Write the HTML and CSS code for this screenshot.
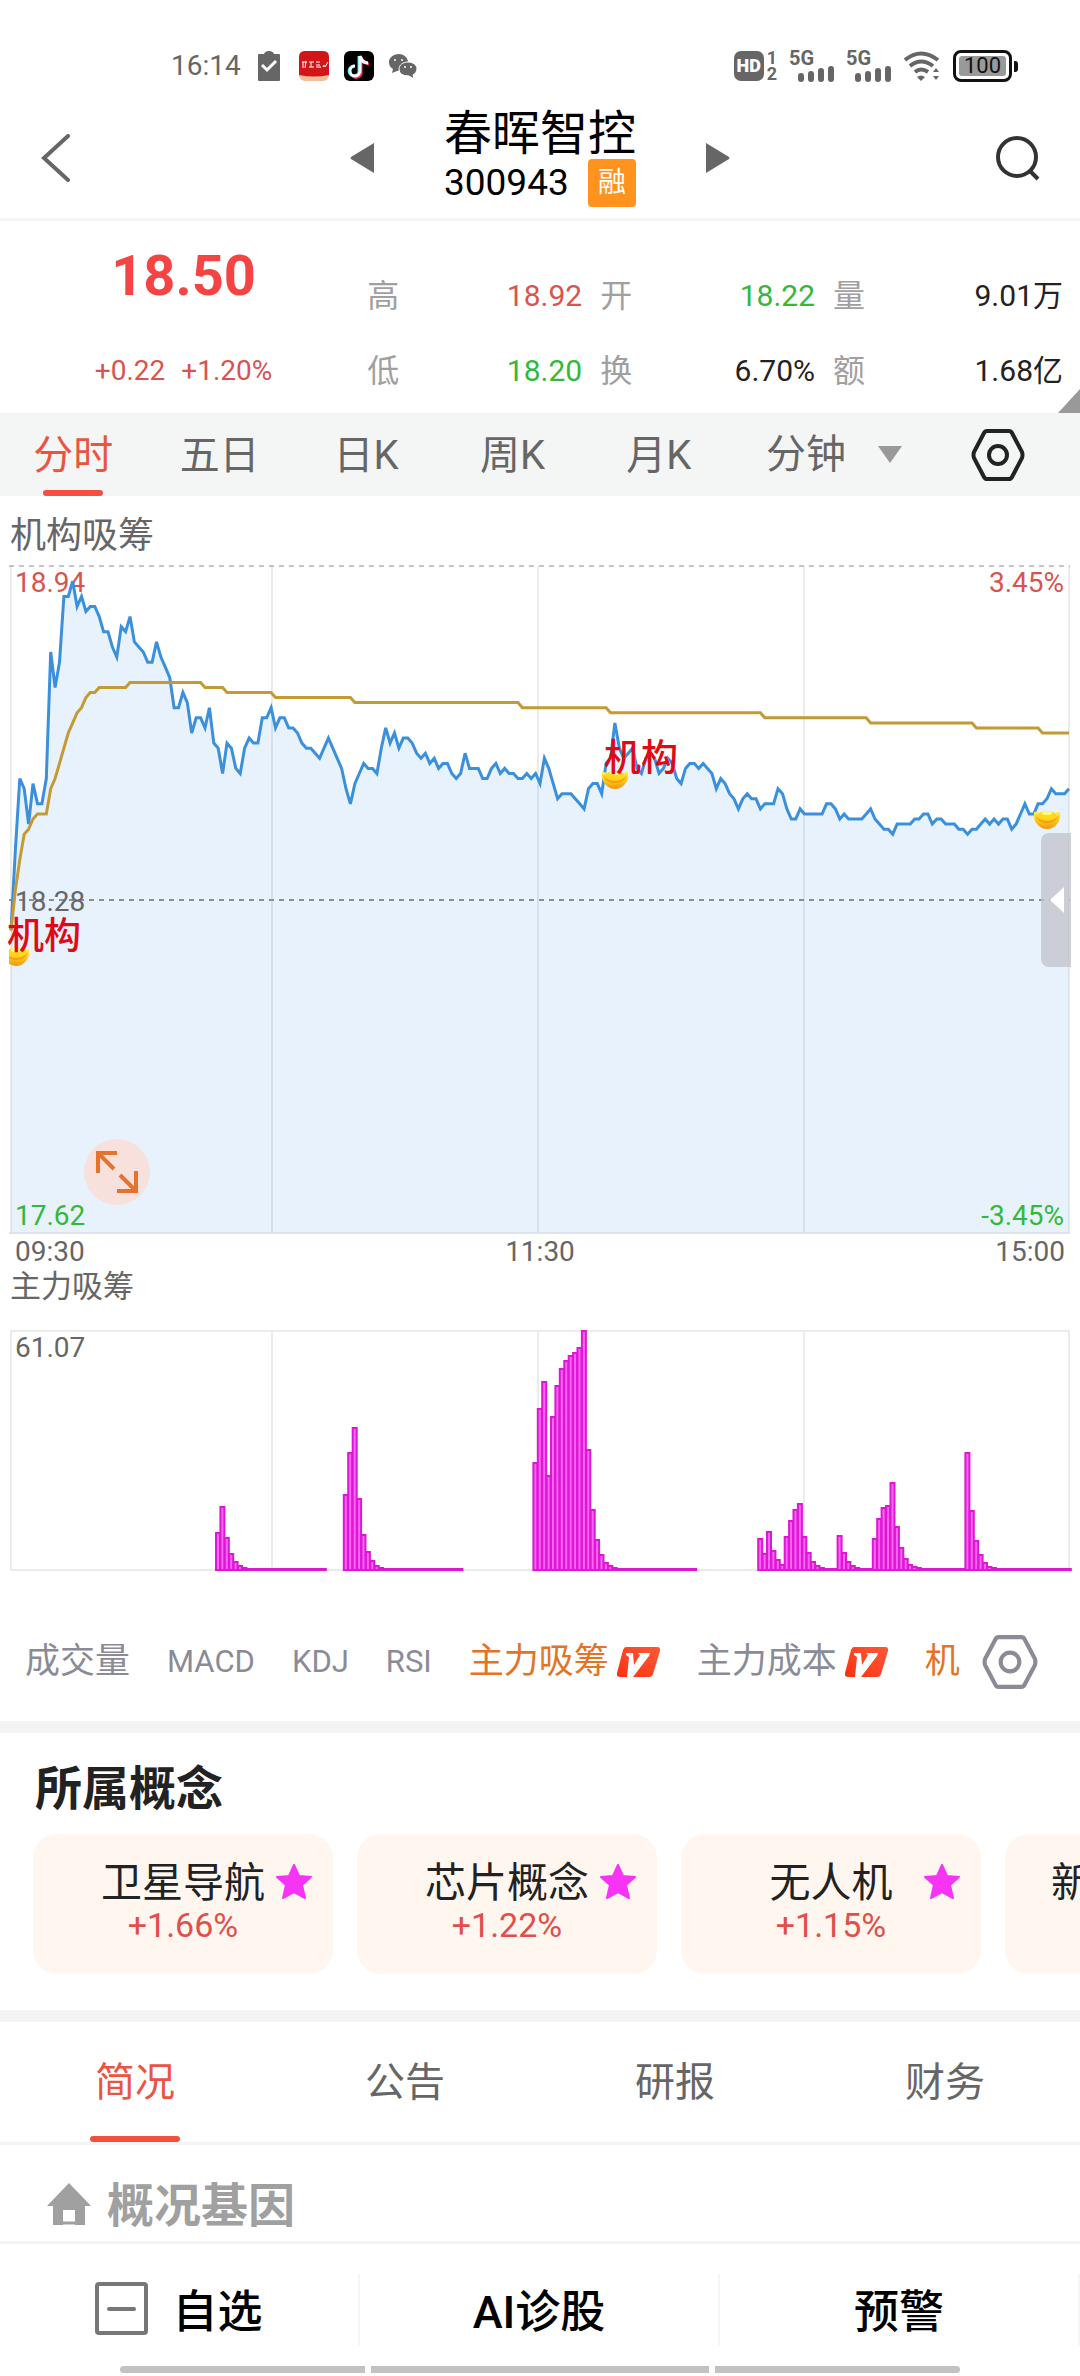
FILE: index.html
```html
<!DOCTYPE html>
<html lang="zh-CN">
<head>
<meta charset="utf-8">
<meta name="viewport" content="width=device-width, initial-scale=1">
<title>春晖智控 300943</title>
<link rel="stylesheet" href="styles.css">
</head>
<body>
<svg class="defs" aria-hidden="true">
  <defs>
    <linearGradient id="bowl" x1="0" y1="0" x2="0" y2="1">
      <stop offset="0" stop-color="#fff04a"/><stop offset=".55" stop-color="#ffc412"/><stop offset="1" stop-color="#f59412"/>
    </linearGradient>
    <linearGradient id="vip" x1="1" y1="0" x2="0" y2="1">
      <stop offset="0" stop-color="#fb5a38"/><stop offset="1" stop-color="#ff3010"/>
    </linearGradient>
    <symbol id="ingot" viewBox="0 0 28 19">
      <path d="M1 4Q0 1 3 2Q14 6 25 2Q28 1 27 4Q28 9 24 14Q20 19 14 19Q8 19 4 14Q0 9 1 4Z" fill="url(#bowl)"/>
      <path d="M2 5Q6 11 14 11Q22 11 26 5Q23 13 14 13Q5 13 2 5Z" fill="#f0a010"/>
      <ellipse cx="14" cy="5" rx="9" ry="4" fill="#ffd81a"/>
      <ellipse cx="14" cy="3" rx="5" ry="2" fill="#fff98a"/>
    </symbol>
    <symbol id="vbadge" viewBox="0 0 43 30">
      <path d="M9 0H40Q44 0 43 4L36 27Q35 30 32 30H3Q-1 30 0 26L6 3Q7 0 9 0Z" fill="url(#vip)"/>
      <path d="M9 6H16L17 18L23 8L21 6H33L32 9L16 30H10L12 10L9 8Z" fill="#fff"/>
    </symbol>
    <symbol id="nut" viewBox="0 0 54 52">
      <path d="M16 2H38Q40 2 41 4L51 23Q52 26 51 29L41 48Q40 50 38 50H16Q14 50 13 48L3 29Q2 26 3 23L13 4Q14 2 16 2Z" fill="none" stroke="currentColor" stroke-width="4"/>
      <circle cx="27" cy="26" r="9" fill="none" stroke="currentColor" stroke-width="4"/>
    </symbol>
    <symbol id="star" viewBox="0 0 36 36">
      <path d="M18 1L23 12L35 13L26 21L29 34L18 28L7 34L10 21L1 13L13 12Z" fill="#f734f5" stroke="#f734f5" stroke-width="2" stroke-linejoin="round"/>
    </symbol>
    <symbol id="signal" viewBox="0 0 36 16">
      <path d="M3 10V13M13 8V13M23 5V13M33 3V13" stroke="#666" stroke-width="6" stroke-linecap="round"/>
    </symbol>
  </defs>
</svg>

<div class="status">
  <div class="status-side">
    <span class="clock">16:14</span>
    <svg class="clip" width="22" height="30" viewBox="0 0 22 30"><path d="M1 3H6Q7 0 11 0Q15 0 16 3H21Q22 3 22 4V29Q22 30 21 30H1Q0 30 0 29V4Q0 3 1 3Z" fill="#666"/><path d="M4 14L9 19L18 10" fill="none" stroke="#fff" stroke-width="3"/></svg>
    <svg width="30" height="30" viewBox="0 0 30 30"><rect width="30" height="30" rx="6" fill="#f3bd9a"/><path d="M0 6Q0 0 6 0H24Q30 0 30 6V24Q15 27 0 24Z" fill="#d31518"/><path d="M3 11H8M4 11V17M7 10L6 17M10 11H15M12 11V16M10 16H15M17 11H21M17 14H21M17 16H22M24 16L25 14L26 16L29 11" fill="none" stroke="#fff" stroke-width="1"/></svg>
    <svg width="30" height="30" viewBox="0 0 30 30"><rect width="30" height="30" rx="6" fill="#000"/><g fill="none" stroke-width="3"><path d="M15 5V19A5 5 0 1 1 10 15M15 5Q17 11 23 12" stroke="#35e0dc"/><path d="M17 6V20A5 5 0 0 1 8 24M17 6Q19 12 25 13" stroke="#f5305a"/><path d="M16 5V20A5 5 0 1 1 11 15M16 5Q18 12 24 12" stroke="#fff"/></g></svg>
    <svg class="chat" width="28" height="25" viewBox="0 0 28 25"><path d="M10 0C4 0 0 4 0 8Q0 13 4 15L3 19L8 17Q19 16 19 8C19 4 15 0 10 0Z" fill="#666"/><path d="M19 8C14 8 10 11 10 15Q10 22 20 22L25 25L24 21Q28 19 28 15C28 11 24 8 19 8Z" fill="#666" stroke="#fff"/><g fill="#fff"><circle cx="6" cy="6" r="1"/><circle cx="13" cy="6" r="1"/><circle cx="16" cy="13" r="1"/><circle cx="22" cy="13" r="1"/></g></svg>
  </div>
  <div class="status-side right">
    <div class="hd"><span class="hd-box">HD</span><span class="sims"><span>1</span><span>2</span></span></div>
    <div class="net"><span>5G</span><svg width="36" height="16"><use href="#signal"/></svg></div>
    <div class="net"><span>5G</span><svg width="36" height="16"><use href="#signal"/></svg></div>
    <svg width="38" height="30" viewBox="0 0 38 30"><path d="M2 9Q18 -4 35 9M7 15Q18 6 30 15M12 21Q18 16 25 21" fill="none" stroke="#666" stroke-width="4"/><path d="M14 26Q18 23 22 26L18 30ZM30 21L33 17L36 21ZM30 25H36L33 29Z" fill="#666"/></svg>
    <div class="battery"><span>100</span></div>
  </div>
</div>

<header class="header">
  <button class="icon-btn" aria-label="返回"><svg width="30" height="48" viewBox="0 0 30 48"><path d="M28 2L4 24L28 46" fill="none" stroke="#666" stroke-width="4" stroke-linecap="round"/></svg></button>
  <div class="switcher">
    <button class="icon-btn" aria-label="上一只"><svg width="24" height="30" viewBox="0 0 24 30"><path d="M24 0V30L1 16Q0 15 1 14Z" fill="#666"/></svg></button>
    <div class="stock">
      <h1>春晖智控</h1>
      <div class="code">300943<span class="rong">融</span></div>
    </div>
    <button class="icon-btn" aria-label="下一只"><svg width="24" height="30" viewBox="0 0 24 30"><path d="M0 0V30L23 16Q24 15 23 14Z" fill="#666"/></svg></button>
  </div>
  <button class="icon-btn end" aria-label="搜索"><svg width="44" height="46" viewBox="0 0 44 46"><circle cx="21" cy="22" r="19" fill="none" stroke="#333" stroke-width="4"/><path d="M34 36L42 44" stroke="#333" stroke-width="4"/></svg></button>
</header>

<section class="quote">
  <div class="now">
    <strong>18.50</strong>
    <p><span>+0.22</span><span>+1.20%</span></p>
  </div>
  <dl class="stats">
    <div><dt>高</dt><dd class="up">18.92</dd></div>
    <div><dt>开</dt><dd class="down">18.22</dd></div>
    <div><dt>量</dt><dd>9.01万</dd></div>
    <div><dt>低</dt><dd class="down">18.20</dd></div>
    <div><dt>换</dt><dd>6.70%</dd></div>
    <div><dt>额</dt><dd>1.68亿</dd></div>
  </dl>
</section>

<nav class="periods">
  <button class="active">分时</button>
  <button>五日</button>
  <button>日K</button>
  <button>周K</button>
  <button>月K</button>
  <button class="more">分钟<svg width="24" height="17" viewBox="0 0 24 17"><path d="M0 0H24L12 17Z" fill="#999"/></svg></button>
  <button class="set" aria-label="设置"><svg width="54" height="52"><use href="#nut"/></svg></button>
</nav>

<section class="charts">
  <h2 class="ind-title">机构吸筹</h2>
  <div class="plot">
    <svg class="chart" id="price" viewBox="0 0 1080 672">
      <defs><clipPath id="plot-area"><path d="M9 0H1070V672H9Z"/></clipPath></defs>
      <g stroke="#ebebed" stroke-width="2"><path d="M11 2V669M272 2V669M538 2V669M804 2V669M1069 2V669"/></g>
      <path id="area" fill="#2b8cf0" fill-opacity=".11"/>
      <path d="M9 669H1070" stroke="#dde3ee" stroke-width="2"/>
      <g stroke="#8c8c94" stroke-dasharray="5 5"><path d="M9 2H1070"/><path d="M9 336H1070" stroke-width="2"/></g>
      <text class="tick up" x="15" y="28">18.94</text>
      <path id="line" fill="none" stroke="#3b90dd" stroke-width="3"/>
      <path id="avg" fill="none" stroke="#c39a35" stroke-width="3"/>
      <text class="tick up" x="1064" y="28" text-anchor="end">3.45%</text>
      <text class="tick" x="15" y="347">18.28</text>
      <text class="tick down" x="15" y="661">17.62</text>
      <text class="tick down" x="1064" y="661" text-anchor="end">-3.45%</text>
      <g clip-path="url(#plot-area)"><use href="#ingot" x="2" y="383" width="28" height="19"/></g>
      <use href="#ingot" x="601" y="206" width="28" height="19"/>
      <use href="#ingot" x="1033" y="246" width="28" height="19"/>
      <text class="mark" x="7" y="385">机构</text>
      <text class="mark" x="604" y="207">机构</text>
    </svg>
    <button class="expand" aria-label="全屏"><svg width="42" height="42" viewBox="0 0 42 42"><path d="M2 22V2H21M3 3L18 18M40 20V40H21M39 39L24 24" fill="none" stroke="#e5732c" stroke-width="4"/></svg></button>
    <button class="drawer" aria-label="展开侧栏"><svg width="14" height="26" viewBox="0 0 14 26"><path d="M14 0V26L0 13Z" fill="#fff"/></svg></button>
  </div>
  <div class="times"><span>09:30</span><span>11:30</span><span>15:00</span></div>
  <h2 class="ind-title sub">主力吸筹</h2>
  <svg class="chart" id="volume" viewBox="0 0 1080 246">
    <path d="M10 3H1070M10 242H1070M11 3V242M272 3V242M538 3V242M804 3V242M1069 3V242" stroke="#ebebed" stroke-width="2" fill="none"/>
    <text class="tick" x="15" y="29">61.07</text>
    <g id="bars"></g>
  </svg>
</section>

<nav class="indicators">
  <div class="ind-list">
    <button>成交量</button>
    <button class="latin">MACD</button>
    <button class="latin">KDJ</button>
    <button class="latin">RSI</button>
    <button class="on">主力吸筹<svg width="43" height="30"><use href="#vbadge"/></svg></button>
    <button>主力成本<svg width="43" height="30"><use href="#vbadge"/></svg></button>
    <button class="on">机</button>
  </div>
  <button class="set" aria-label="指标设置"><svg width="56" height="54"><use href="#nut"/></svg></button>
</nav>

<section class="concepts">
  <h2>所属概念</h2>
  <div class="cards">
    <a class="card" href="#"><b>卫星导航</b><span>+1.66%</span><svg width="36" height="36"><use href="#star"/></svg></a>
    <a class="card" href="#"><b>芯片概念</b><span>+1.22%</span><svg width="36" height="36"><use href="#star"/></svg></a>
    <a class="card" href="#"><b>无人机</b><span>+1.15%</span><svg width="36" height="36"><use href="#star"/></svg></a>
    <a class="card next" href="#"><b>新</b></a>
  </div>
</section>

<nav class="info-tabs">
  <button class="active">简况</button>
  <button>公告</button>
  <button>研报</button>
  <button>财务</button>
</nav>

<section class="profile">
  <svg width="44" height="42" viewBox="0 0 44 42"><path d="M22 0L44 23H38V42H28V27H16V42H6V23H0Z" fill="#a0a0a0"/><path d="M6 40H38" stroke="#a0a0a0" stroke-width="3"/></svg>
  <h2>概况基因</h2>
</section>

<footer class="actions">
  <button><svg width="53" height="53" viewBox="0 0 53 53"><rect x="2" y="2" width="49" height="49" rx="2" fill="none" stroke="#777" stroke-width="4"/><path d="M14 27H39" stroke="#777" stroke-width="4" stroke-linecap="round"/></svg>自选</button>
  <button>AI诊股</button>
  <button>预警</button>
</footer>
<div class="gesture"><i></i><i></i><i></i></div>

<script src="chart.js"></script>
</body>
</html>
```
FILE: styles.css
```css
* { box-sizing: border-box; }
body {
  margin: 0;
  background: #fff;
  color: #222;
  font-family: Roboto, "Noto Sans CJK SC", sans-serif;
  font-size: 36px;
  overflow-x: hidden;
}
h1, h2, p, dl, dd { margin: 0; }
button {
  margin: 0;
  padding: 0;
  border: 0;
  background: none;
  color: inherit;
  font: inherit;
  white-space: nowrap;
}
svg { display: block; }
.defs { position: absolute; width: 0; height: 0; }
.up { color: #d9534f; }
.down { color: #35b83a; }

/* system status bar */
.status {
  display: flex;
  justify-content: space-between;
  align-items: flex-end;
  height: 82px;
  padding: 0 68px 0 171px;
  color: #666;
}
.status-side { display: flex; align-items: center; gap: 15px; height: 32px; }
.status-side.right { gap: 12px; }
.clock { font-size: 28px; line-height: 28px; margin-right: 2px; }
.clip { margin-right: 4px; }
.hd { display: flex; gap: 3px; align-items: center; }
.hd-box {
  width: 30px;
  border-radius: 7px;
  background: #666;
  color: #fff;
  font-size: 18px;
  font-weight: 900;
  line-height: 30px;
  text-align: center;
}
.sims { display: flex; flex-direction: column; font-size: 18px; font-weight: 700; line-height: 16px; }
.net { display: flex; flex-direction: column; width: 45px; font-size: 20px; font-weight: 700; line-height: 15px; }
.net svg { align-self: flex-end; }
.battery {
  position: relative;
  width: 59px;
  height: 32px;
  padding: 3px;
  border: 3px solid #111;
  border-radius: 8px;
}
.battery span { display: block; border-radius: 3px; background: #999; color: #111; font-size: 22px; line-height: 20px; text-align: center; }
.battery::after { content: ""; position: absolute; right: -9px; top: 8px; width: 4px; height: 11px; border-radius: 0 3px 3px 0; background: #111; }

/* title bar */
.header {
  display: grid;
  grid-template-columns: 1fr auto 1fr;
  align-items: center;
  height: 139px;
  padding: 16px 40px 0;
  border-bottom: 3px solid #f3f4f5;
}
.icon-btn { display: flex; }
.icon-btn.end { justify-self: end; }
.switcher { display: flex; align-items: center; gap: 70px; }
.stock { color: #000; }
.stock h1 { font-size: 48px; font-weight: 400; line-height: 50px; }
.code { display: flex; justify-content: space-between; align-items: center; font-size: 37px; line-height: 48px; }
.rong { width: 48px; border-radius: 4px; background: #ff931e; color: #fff; font-size: 28px; text-align: center; }

/* quote */
.quote {
  position: relative;
  display: flex;
  height: 192px;
}
.quote::after {
  content: "";
  position: absolute;
  right: 0;
  bottom: 0;
  border: solid transparent;
  border-width: 0 0 24px 22px;
  border-bottom-color: #999;
}
.now { flex: 0 0 34%; padding-top: 20px; color: #d9534f; text-align: center; }
.now strong { display: block; color: #f44444; font-size: 56px; line-height: 70px; }
.now p { display: flex; justify-content: center; gap: 16px; padding-top: 41px; font-size: 28px; line-height: 38px; }
.stats {
  flex: 1;
  display: grid;
  grid-template-columns: 215fr 215fr 230fr;
  gap: 35px 18px;
  padding: 55px 17px 0 0;
  align-content: start;
}
.stats div { display: flex; justify-content: space-between; font-size: 30px; line-height: 40px; }
.stats dt { color: #a0a0a0; font-size: 32px; }

/* period tabs */
.periods { display: flex; height: 83px; padding-right: 20px; background: #f4f6f6; color: #666; font-size: 40px; line-height: 86px; }
.periods button { position: relative; flex: 146 0 0; }
.periods .more { flex-grow: 203; display: flex; align-items: center; justify-content: center; gap: 32px; }
.periods .set { flex-grow: 124; display: flex; align-items: center; justify-content: center; color: #222; }
.active { color: #e95541; }
.periods .active::after, .info-tabs .active::after {
  content: "";
  position: absolute;
  bottom: 0;
  left: 50%;
  width: 60px;
  height: 6px;
  margin-left: -30px;
  border-radius: 3px;
  background: #f4503d;
}

/* charts */
.ind-title { padding: 20px 10px 8px; color: #666; font-size: 36px; font-weight: 400; line-height: 40px; }
.ind-title.sub { padding: 0 10px; margin-bottom: 20px; font-size: 31px; line-height: 42px; }
.plot { position: relative; }
.chart { width: 100%; }
.tick { font-size: 28px; fill: #666; }
.tick.up { fill: #d9534f; }
.tick.down { fill: #35b83a; }
.mark { font-size: 37px; font-weight: 500; fill: #e00a14; }
.times { display: flex; justify-content: space-between; padding: 0 15px; color: #666; font-size: 28px; line-height: 32px; height: 30px; }
.expand {
  position: absolute;
  left: 84px;
  bottom: 31px;
  width: 66px;
  height: 66px;
  padding: 12px;
  border-radius: 50%;
  background: #f8e0dc;
}
.drawer {
  position: absolute;
  right: 9px;
  top: 40%;
  width: 30px;
  height: 20%;
  padding-left: 9px;
  border-radius: 8px 0 0 8px;
  background: rgba(196, 196, 204, 0.78);
}
#bars rect { fill: #ff62f6; stroke: #dc18d2; stroke-width: 2; }

/* indicator selector */
.indicators { display: flex; align-items: center; height: 147px; padding: 28px 42px 0 25px; color: #8b8b98; }
.ind-list { flex: 1; display: flex; align-items: center; gap: 37px; overflow: hidden; line-height: 48px; }
.ind-list button { display: flex; align-items: center; gap: 8px; font-size: 35px; }
.ind-list .latin { font-size: 31px; }
.indicators .on { color: #e27424; }

/* concepts */
.concepts { border: solid #f3f5f5; border-width: 12px 0; padding: 26px 0 36px 33px; }
.concepts h2 { padding-left: 2px; font-size: 47px; line-height: 60px; margin-bottom: 15px; }
.cards { display: flex; gap: 24px; overflow: hidden; }
.card {
  position: relative;
  flex: 0 0 300px;
  display: flex;
  flex-direction: column;
  align-items: center;
  height: 140px;
  padding-top: 26px;
  border-radius: 24px;
  background: #fff6f0;
  color: #222;
  text-decoration: none;
}
.card b { font-size: 41px; font-weight: 400; line-height: 46px; }
.card span { color: #e04f4a; font-size: 34px; line-height: 38px; }
.card svg { position: absolute; top: 30px; right: 21px; }
.card.next { align-items: flex-start; padding-left: 46px; }

/* company information */
.info-tabs { display: grid; grid-template-columns: repeat(4, 1fr); height: 123px; border-bottom: 3px solid #f3f5f5; color: #666; font-size: 40px; }
.info-tabs button { position: relative; padding-bottom: 7px; }
.info-tabs .active { color: #e95541; }
.info-tabs .active::after { width: 90px; margin-left: -45px; }
.profile { display: flex; align-items: center; gap: 16px; height: 99px; padding: 22px 47px 0; border-bottom: 3px solid #f3f5f5; color: #a0a0a0; }
.profile h2 { font-size: 47px; line-height: 50px; padding-top: 4px; }

/* bottom actions */
.actions { display: grid; grid-template-columns: repeat(3, 1fr); padding: 30px 0 20px; color: #000; font-size: 45px; font-weight: 500; }
.actions button { display: flex; align-items: center; justify-content: center; gap: 24px; height: 72px; padding-bottom: 4px; border-right: 2px solid #f5f5f5; }
.gesture { display: flex; gap: 6px; height: 10px; padding: 0 120px; }
.gesture i { flex: 245; height: 7px; background: #c2c2c2; }
.gesture i:nth-child(2) { flex-grow: 338; }
.gesture i:first-child { border-radius: 4px 0 0 4px; }
.gesture i:last-child { border-radius: 0 4px 4px 0; }
```
FILE: chart.js
```js
// Minute prices, in cents above the previous close of 18.28.
const prices = [
  -6,10,24,22,15,23,19,19,24,49,42,47,60,60,63,58,60,57,58,58,
  56,53,53,50,48,54,53,56,51,50,49,47,47,51,48,46,44,38,38,41,
  39,33,36,36,34,38,31,30,25,31,30,26,25,30,32,31,31,36,36,38,
  34,36,36,34,34,33,31,30,30,29,28,30,32,30,28,26,22,19,23,25,
  27,26,26,25,30,34,31,33,30,32,32,31,29,28,29,27,28,26,27,27,
  25,24,25,29,26,26,26,24,24,26,27,25,26,25,25,24,24,25,24,25,
  23,28,26,23,20,21,21,21,20,19,18,22,23,23,21,27,28,35,30,28,
  29,30,26,25,28,29,28,25,26,28,27,24,23,26,27,27,26,27,26,25,
  22,24,23,21,20,18,20,21,20,20,18,19,19,19,22,21,18,16,16,18,
  17,17,17,17,17,19,19,18,16,17,16,16,16,16,17,18,16,15,14,14,
  13,15,15,15,15,16,16,17,17,15,16,16,15,15,15,14,14,13,14,14,
  15,16,15,16,15,16,16,14,15,17,19,17,17,19,19,20,22,21,21,21,22
];

// Average price: [first minute, cents above the close]; flat until the next entry.
const averageSteps = [
  [0,-6],[1,2],[2,8],[3,13],[4,14],[5,16],[6,17],[9,22],[10,24],[11,27],[12,30],
  [13,33],[14,35],[15,37],[16,38],[17,40],[18,41],[20,42],[27,43],[44,42],[49,41],
  [60,40],[78,39],[116,38],[136,37],[171,36],[195,35],[219,34],[234,33],[241,33]
];
const average = [];
for (let s = 0; s < averageSteps.length - 1; s++) {
  for (let i = averageSteps[s][0]; i < averageSteps[s + 1][0]; i++) average.push(averageSteps[s][1]);
}

const x = i => 11 + i * 1058 / 240;
const y = c => 336 - c * 334 / 66;
const path = data => "M" + data.map((c, i) => x(i).toFixed(1) + " " + y(c).toFixed(1)).join("L");

document.getElementById("line").setAttribute("d", path(prices));
document.getElementById("avg").setAttribute("d", path(average));
document.getElementById("area").setAttribute("d", path(prices) + "L1069 669L11 669Z");

// Bar groups: first minute, last minute, leading heights; the tail stays at 1.
const groups = [
  [47, 71, [37,63,32,16,8,4,2]],
  [76, 102, [75,117,142,71,35,18,9,4,2]],
  [119, 155, [107,161,188,94,153,184,201,209,214,217,222,239,120,60,30,15,7,4,2]],
  [170, 187, [31,16,38,19,10,5,33,49,60,66,33,17,8,4,2]],
  [188, 195, [34,17,8,4,2]],
  [196, 216, [31,51,62,64,87,43,22,11,5,3,2]],
  [217, 240, [117,59,29,15,7,3,2]]
];
const bars = document.getElementById("bars");
for (const [first, last, heights] of groups) {
  for (let i = first; i <= last; i++) {
    const h = heights[i - first] || 1;
    const bar = document.createElementNS("http://www.w3.org/2000/svg", "rect");
    bar.setAttribute("x", (x(i) - 2.2).toFixed(1));
    bar.setAttribute("y", 242 - h);
    bar.setAttribute("width", 4);
    bar.setAttribute("height", h);
    bars.appendChild(bar);
  }
}
```
